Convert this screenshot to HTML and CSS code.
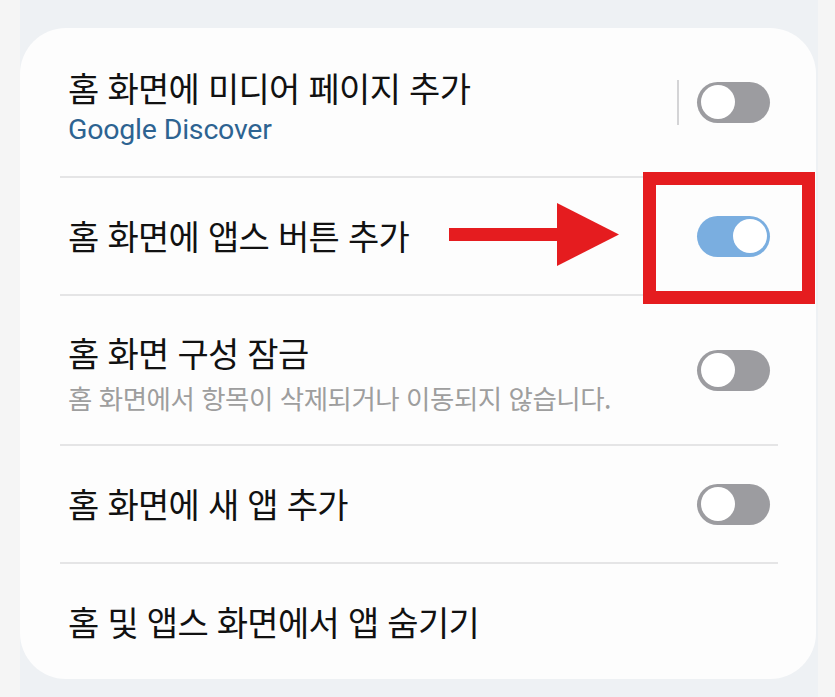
FILE: index.html
```html
<!DOCTYPE html>
<html lang="ko">
<head>
<meta charset="utf-8">
<link rel="stylesheet" href="styles.css">
</head>
<body>
<div class="screen">
  <div class="edge edge-left"></div>
  <main class="panel">
    <section class="card">
      <div class="row row-tall row-first">
        <div class="text">
          <div class="title">홈 화면에 미디어 페이지 추가</div>
          <div class="sub sub-link">Google Discover</div>
        </div>
        <div class="vsep"></div>
        <div class="toggle"><span class="knob"></span></div>
      </div>
      <div class="row row-short">
        <div class="text">
          <div class="title">홈 화면에 앱스 버튼 추가</div>
        </div>
        <div class="toggle toggle-on"><span class="knob"></span></div>
      </div>
      <div class="row row-tall row-third">
        <div class="text">
          <div class="title">홈 화면 구성 잠금</div>
          <div class="sub sub-gray">홈 화면에서 항목이 삭제되거나 이동되지 않습니다.</div>
        </div>
        <div class="toggle"><span class="knob"></span></div>
      </div>
      <div class="row row-short">
        <div class="text">
          <div class="title">홈 화면에 새 앱 추가</div>
        </div>
        <div class="toggle"><span class="knob"></span></div>
      </div>
      <div class="row row-last">
        <div class="text">
          <div class="title">홈 및 앱스 화면에서 앱 숨기기</div>
        </div>
      </div>
    </section>
  </main>
  <div class="edge edge-right"></div>

  <svg class="arrow" width="172" height="64" viewBox="0 0 172 64" aria-hidden="true">
    <rect x="0" y="25" width="110" height="13" fill="#e51c1f"/>
    <polygon points="108,0 170,31.5 108,63" fill="#e51c1f"/>
  </svg>
  <div class="highlight"></div>
</div>
</body>
</html>
```

FILE: styles.css
```css
* { box-sizing: border-box; }

html, body {
  margin: 0;
  padding: 0;
  width: 835px;
  height: 697px;
  overflow: hidden;
  background: #f5f5f5;
  font-family: "Noto Sans CJK KR", "Noto Sans", sans-serif;
}

.screen {
  position: relative;
  display: flex;
  width: 835px;
  height: 697px;
}

.edge {
  background: #f5f5f5;
  height: 100%;
}
.edge-left { width: 20px; }
.edge-right { width: 17px; }

.panel {
  width: 798px;
  height: 100%;
  background: #eef1f4;
  padding-top: 28px;
  padding-right: 2px;
}

.card {
  background: #fdfdfd;
  border-radius: 46px;
  height: 651px;
  display: flex;
  flex-direction: column;
}

.row {
  display: flex;
  align-items: center;
  margin: 0 38px 0 40px;
  padding: 0 8px;
  border-bottom: 2px solid #e5e5e6;
}

.row-short { height: 118px; }
.row-tall { height: 150px; }
.row-first .text { padding-top: 12px; }
.row-third .text { padding-top: 12px; }
.row-last { border-bottom: none; height: 115px; }

.text {
  flex: 1;
  display: flex;
  flex-direction: column;
}

.title {
  font-size: 34px;
  line-height: 44px;
  color: #111111;
  letter-spacing: -0.7px;
}

.sub {
  line-height: 40px;
}

.sub-link {
  font-family: "Roboto", "Noto Sans", sans-serif;
  font-size: 28.5px;
  color: #2d6391;
  letter-spacing: -0.2px;
}

.sub-gray {
  font-size: 26.5px;
  color: #9e9e9e;
  letter-spacing: -0.5px;
  line-height: 46px;
}

.vsep {
  width: 2px;
  height: 45px;
  background: #d4d4d6;
  margin-right: 18px;
  align-self: center;
}

.toggle {
  width: 73px;
  height: 41px;
  border-radius: 21px;
  background: #9c9ca0;
  display: flex;
  align-items: center;
  padding: 0 4px;
  flex-shrink: 0;
}

.toggle-on {
  background: #7aaee0;
  justify-content: flex-end;
  padding: 0 3px;
}

.knob {
  width: 34px;
  height: 34px;
  border-radius: 50%;
  background: #ffffff;
}

.arrow {
  position: absolute;
  left: 449px;
  top: 203px;
}

.highlight {
  position: absolute;
  left: 643px;
  top: 172px;
  width: 172px;
  height: 132px;
  border: 13px solid #e51c1f;
}
```
